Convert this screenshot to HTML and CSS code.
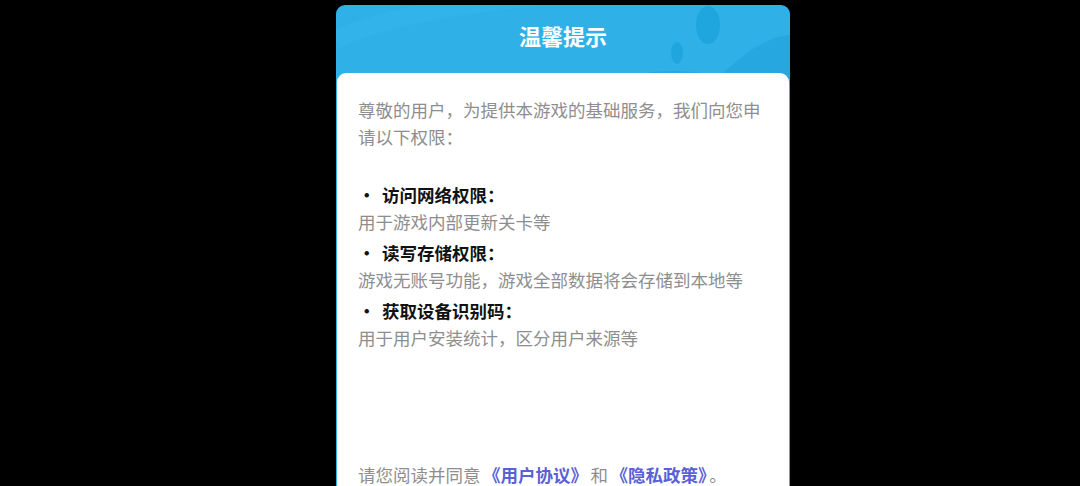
FILE: index.html
```html
<!DOCTYPE html>
<html lang="zh-CN">
<head>
<meta charset="utf-8">
<link rel="stylesheet" href="styles.css">
</head>
<body>
<div class="dialog">
  <div class="header">
    <svg class="deco" width="454" height="80" viewBox="0 0 454 80" aria-hidden="true">
      <path d="M0 34 C 60 8, 140 -2, 200 -8" fill="none" stroke="#3cbaee" stroke-width="18" opacity="0.3"/>
      <ellipse cx="372" cy="20" rx="12" ry="19" fill="#1fa6df"/>
      <ellipse cx="341" cy="48" rx="6" ry="11" fill="#1fa6df"/>
      <path d="M270 80 C 300 64, 350 62, 384 72 C 404 50, 430 32, 454 30 L454 80 Z" fill="#27a7df"/>
    </svg>
    <h1 class="title">温馨提示</h1>
  </div>
  <div class="card">
    <p class="intro">尊敬的用户，为提供本游戏的基础服务，我们向您申请以下权限：</p>
    <div class="blank"></div>
    <div class="item">
      <div class="item-title"><span class="bullet">•</span><span>访问网络权限：</span></div>
      <div class="item-desc">用于游戏内部更新关卡等</div>
    </div>
    <div class="item">
      <div class="item-title"><span class="bullet">•</span><span>读写存储权限：</span></div>
      <div class="item-desc">游戏无账号功能，游戏全部数据将会存储到本地等</div>
    </div>
    <div class="item">
      <div class="item-title"><span class="bullet">•</span><span>获取设备识别码：</span></div>
      <div class="item-desc">用于用户安装统计，区分用户来源等</div>
    </div>
    <p class="agree">请您阅读并同意<a class="link">《用户协议》</a>和<a class="link">《隐私政策》</a>。</p>
  </div>
</div>
</body>
</html>
```
FILE: styles.css
```css
html, body {
  margin: 0;
  padding: 0;
  background: #000;
  height: 486px;
  overflow: hidden;
}
body {
  font-family: "Noto Sans CJK SC", "Noto Sans", sans-serif;
}
.dialog {
  width: 454px;
  margin: 5px 0 0 336px;
  background: #2fb1e7;
  border-radius: 9px 9px 0 0;
  overflow: hidden;
}
.header {
  position: relative;
  height: 68px;
  display: flex;
  justify-content: center;
  align-items: flex-start;
}
.deco {
  position: absolute;
  left: 0;
  top: 0;
}
.title {
  position: relative;
  margin: 0;
  padding-top: 14px;
  font-size: 22px;
  line-height: 32px;
  font-weight: 700;
  color: #fff;
}
.card {
  position: relative;
  background: #fff;
  margin: 0 1px 0 1px;
  border-radius: 9px 9px 0 0;
  padding: 23px 21px 40px 21px;
  font-size: 17.5px;
  line-height: 27px;
  color: #8e8e8e;
}
.intro {
  margin: 0;
}
.blank {
  height: 27px;
}
.item-title {
  display: flex;
  margin-top: 4px;
  color: #111;
  font-weight: 700;
}
.bullet {
  width: 16px;
  text-align: center;
  margin-right: 8px;
}
.item-desc {
  color: #8e8e8e;
}
.agree {
  margin: 110px 0 0 0;
}
.link {
  color: #5b5fd8;
  font-weight: 700;
  margin: 0 2.5px;
}
```
